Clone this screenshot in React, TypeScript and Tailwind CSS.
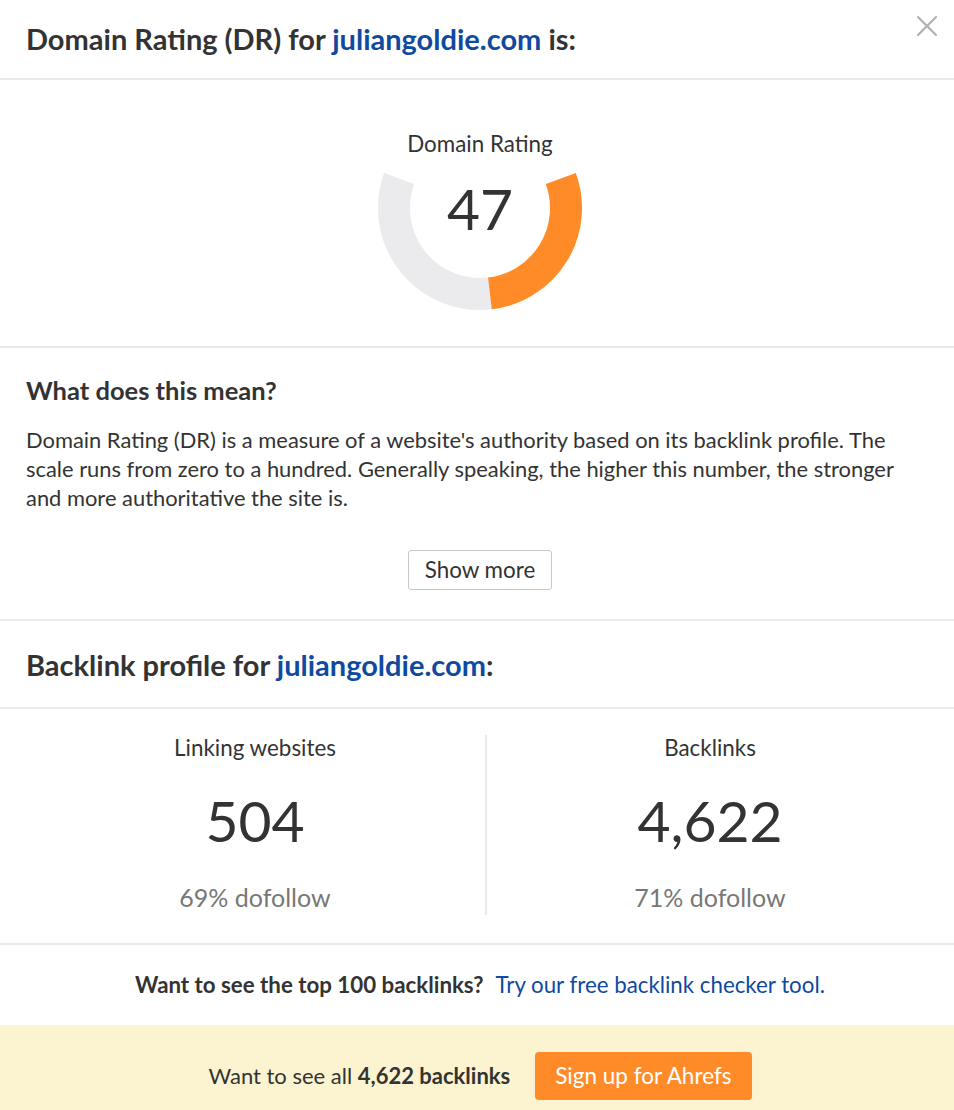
import { X } from "lucide-react";

const font = { fontFamily: "Lato, 'Open Sans', sans-serif" };

// 半环形仪表盘
function Gauge({ value }: { value: number }) {
  const cx = 102;
  const cy = 102;
  const r = 86;
  const start = 160; // 左上角
  const sweep = 220;
  const mid = start + sweep * (1 - value / 100);
  const end = start + sweep;
  const pt = (deg: number) => {
    const a = (deg * Math.PI) / 180;
    return `${(cx + r * Math.cos(a)).toFixed(2)} ${(cy - r * Math.sin(a)).toFixed(2)}`;
  };
  const large = (a: number, b: number) => (b - a > 180 ? 1 : 0);
  return (
    <div className="relative h-[204px] w-[204px]">
      <svg width="204" height="204" viewBox="0 0 204 204">
        <path
          d={`M ${pt(start)} A ${r} ${r} 0 ${large(start, mid)} 0 ${pt(mid)}`}
          fill="none"
          stroke="#ebebed"
          strokeWidth="32"
        />
        <path
          d={`M ${pt(mid)} A ${r} ${r} 0 ${large(mid, end)} 0 ${pt(end)}`}
          fill="none"
          stroke="#ff8b28"
          strokeWidth="32"
        />
      </svg>
      <div className="absolute inset-0 flex items-center justify-center text-[57px] leading-none text-[#333]">
        {value}
      </div>
    </div>
  );
}

function Stat({
  label,
  value,
  sub,
  className = "",
}: {
  label: string;
  value: string;
  sub: string;
  className?: string;
}) {
  return (
    <div className={`flex flex-col items-center ${className}`}>
      <div className="text-[22.4px] leading-[30px] text-[#333]">{label}</div>
      <div className="mt-[25px] text-[57px] leading-[64px] text-[#333]">{value}</div>
      <div className="mt-[29px] text-[25px] leading-[32px] text-[#777]">{sub}</div>
    </div>
  );
}

export default function App() {
  return (
    <div className="min-h-[1110px] w-[954px] overflow-hidden bg-white text-[#333]" style={font}>
      {/* 标题 */}
      <div className="relative flex h-[80px] items-center border-b-2 border-[#e9e9e9] px-[26px]">
        <h1 className="pb-[2px] text-[29px] font-bold leading-none">
          Domain Rating (DR) for <span className="text-[#0f4aa0]">juliangoldie.com</span> is:
        </h1>
        <button className="absolute right-[9px] top-[8px] text-[#b0b0b0]">
          <X size={36} strokeWidth={1.4} />
        </button>
      </div>

      {/* 仪表盘 */}
      <div className="flex h-[268px] flex-col items-center border-b-2 border-[#e9e9e9] pl-[6px] pt-[50px]">
        <div className="text-[22.4px] leading-[28px]">Domain Rating</div>
        <div className="mt-[-52px]">
          <Gauge value={47} />
        </div>
      </div>

      {/* 说明 */}
      <div className="flex h-[273px] flex-col border-b-2 border-[#e9e9e9] px-[26px] pt-[26px]">
        <h2 className="text-[25.5px] font-bold leading-[32px]">What does this mean?</h2>
        <p className="mt-[19px] whitespace-nowrap text-[21.9px] leading-[29px]">
          Domain Rating (DR) is a measure of a website's authority based on its backlink profile. The
          <br />
          scale runs from zero to a hundred. Generally speaking, the higher this number, the stronger
          <br />
          and more authoritative the site is.
        </p>
        <div className="mt-[38px] flex justify-center pl-[6px]">
          <button className="h-[40px] rounded-[3px] border border-[#c8c8c8] px-[16px] text-[22.4px] leading-none">
            Show more
          </button>
        </div>
      </div>

      {/* 反向链接标题 */}
      <div className="flex h-[88px] items-center border-b-2 border-[#e9e9e9] px-[26px]">
        <h2 className="text-[29px] font-bold leading-none">
          Backlink profile for <span className="text-[#0f4aa0]">juliangoldie.com</span>:
        </h2>
      </div>

      {/* 统计 */}
      <div className="flex h-[236px] items-start border-b-2 border-[#e9e9e9] pl-[25px] pt-[24px]">
        <Stat className="w-[460px]" label="Linking websites" value="504" sub="69% dofollow" />
        <div className="mt-[2px] h-[180px] w-[2px] bg-[#e9e9e9]" />
        <Stat className="w-[446px]" label="Backlinks" value="4,622" sub="71% dofollow" />
      </div>

      {/* 提示 */}
      <div className="flex h-[80px] items-center justify-center pl-[6px] text-[22.3px]">
        <span className="font-bold">Want to see the top 100 backlinks?</span>
        <a className="ml-[12px] text-[#0f4aa0]">Try our free backlink checker tool.</a>
      </div>

      {/* 注册横幅 */}
      <div className="flex h-[86px] items-start justify-center bg-[#fcf3d0] pl-[6px] pt-[27px] text-[22px]">
        <span className="leading-[48px]">
          Want to see all <span className="font-bold">4,622 backlinks</span>
        </span>
        <button className="ml-[25px] h-[48px] rounded-[4px] bg-[#ff8b28] px-[20px] text-[22.5px] text-white">
          Sign up for Ahrefs
        </button>
      </div>
    </div>
  );
}
